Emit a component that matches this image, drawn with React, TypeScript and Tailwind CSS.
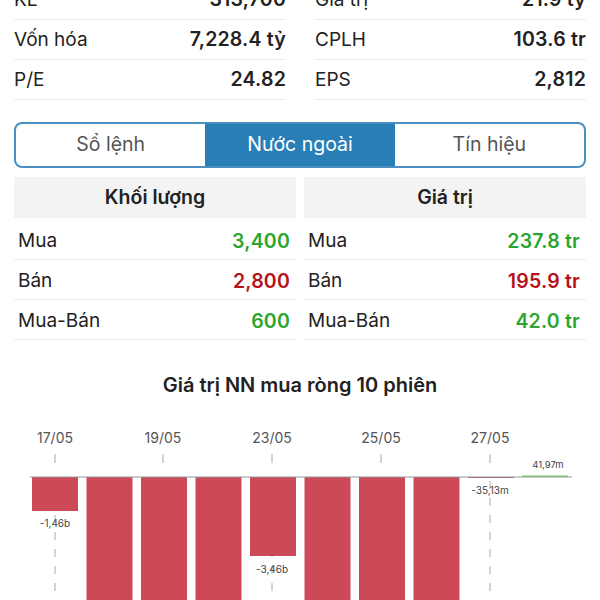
import React from 'react';

const font = { fontFamily: 'Inter, "Noto Sans", "Liberation Sans", sans-serif' };

const stats = [
  [
    ['KL', '313,700'],
    ['Vốn hóa', '7,228.4 tỷ'],
    ['P/E', '24.82'],
  ],
  [
    ['Giá trị', '21.9 tỷ'],
    ['CPLH', '103.6 tr'],
    ['EPS', '2,812'],
  ],
];

const foreign = [
  {
    title: 'Khối lượng',
    rows: [
      ['Mua', '3,400', 'text-[#2ba52f]'],
      ['Bán', '2,800', 'text-[#b5121b]'],
      ['Mua-Bán', '600', 'text-[#2ba52f]'],
    ],
  },
  {
    title: 'Giá trị',
    rows: [
      ['Mua', '237.8 tr', 'text-[#2ba52f]'],
      ['Bán', '195.9 tr', 'text-[#b5121b]'],
      ['Mua-Bán', '42.0 tr', 'text-[#2ba52f]'],
    ],
  },
];

// bar depth in px below the zero line (y = 476)
const bars = [34, 140, 140, 140, 79, 140, 140, 140, 1];
const dates = [
  { x: 55, label: '17/05' },
  { x: 163, label: '19/05' },
  { x: 272, label: '23/05' },
  { x: 381, label: '25/05' },
  { x: 490, label: '27/05' },
];

const Chart = () => {
  const zero = 476;
  return (
    <svg width="600" height="200" viewBox="0 400 600 200" className="block">
      {dates.map((d) => (
        <g key={d.label}>
          <text x={d.x} y={442} textAnchor="middle" fontSize="14" fill="#555" style={font}>
            {d.label}
          </text>
          <line x1={d.x} x2={d.x} y1={453} y2={462} stroke="#aaa" strokeWidth="1" />
          <line x1={d.x} x2={d.x} y1={480} y2={600} stroke="#aaa" strokeWidth="1" strokeDasharray="8 9" />
        </g>
      ))}
      {bars.map((h, i) => (
        <rect key={i} x={32 + i * 54.5} y={zero} width={46} height={h} fill="#cd4957" />
      ))}
      <line x1={30} x2={572} y1={zero} y2={zero} stroke="#8f9c9c" strokeWidth="1.2" />
      <rect x={522} y={zero - 1.5} width={46} height={1.5} fill="#7fbf7f" />
      <text x={55} y={526} textAnchor="middle" fontSize="10" fill="#444" style={font}>
        -1,46b
      </text>
      <text x={272} y={572} textAnchor="middle" fontSize="10" fill="#444" style={font}>
        -3,46b
      </text>
      <text x={490} y={493} textAnchor="middle" fontSize="10" fill="#444" style={font}>
        -35,13m
      </text>
      <text x={548} y={467} textAnchor="middle" fontSize="9.5" fill="#444" style={font}>
        41,97m
      </text>
    </svg>
  );
};

export default function App() {
  return (
    <div className="w-[600px] h-[600px] overflow-hidden bg-white text-[#222]" style={font}>
      <div className="-mt-[20px] grid grid-cols-2 gap-x-[28px] px-[14px]">
        {stats.map((col, ci) => (
          <div key={ci} className="flex flex-col">
            {col.map(([k, v]) => (
              <div key={k} className="flex h-[40px] items-center justify-between border-b border-[#ececec] pt-[1px] text-[19px]">
                <span className={ci === 1 ? 'pl-[1px]' : ''}>{k}</span>
                <span className="text-[19.5px] font-semibold tracking-[0.2px]">{v}</span>
              </div>
            ))}
          </div>
        ))}
      </div>

      <div className="mx-[14px] mt-[22px] grid h-[46px] grid-cols-3 overflow-hidden rounded-[8px] border-[2px] border-[#4a8fbf] text-[19.5px]">
        <div className="flex items-center justify-center text-[#555]">Sổ lệnh</div>
        <div className="flex items-center justify-center bg-[#2a7eb6] text-white">Nước ngoài</div>
        <div className="flex items-center justify-center text-[#555]">Tín hiệu</div>
      </div>

      <div className="mt-[9px] grid grid-cols-2 gap-x-[8px] px-[14px]">
        {foreign.map((col) => (
          <div key={col.title} className="flex flex-col">
            <div className="flex h-[41px] items-center justify-center bg-[#f3f3f3] pt-[1px] text-[19.5px] font-semibold">
              {col.title}
            </div>
            <div className="flex flex-col pt-[2px]">
              {col.rows.map(([k, v, c]) => (
                <div key={k} className="flex h-[40px] items-center justify-between border-b border-[#ececec] pl-[4px] pr-[6px] pt-[4px] text-[19px]">
                  <span>{k}</span>
                  <span className={`text-[19.5px] font-semibold tracking-[0.2px] ${c}`}>{v}</span>
                </div>
              ))}
            </div>
          </div>
        ))}
      </div>

      <div className="mt-[30px] text-center text-[20px] font-semibold">Giá trị NN mua ròng 10 phiên</div>
      <div className="mt-[1px]">
        <Chart />
      </div>
    </div>
  );
}
